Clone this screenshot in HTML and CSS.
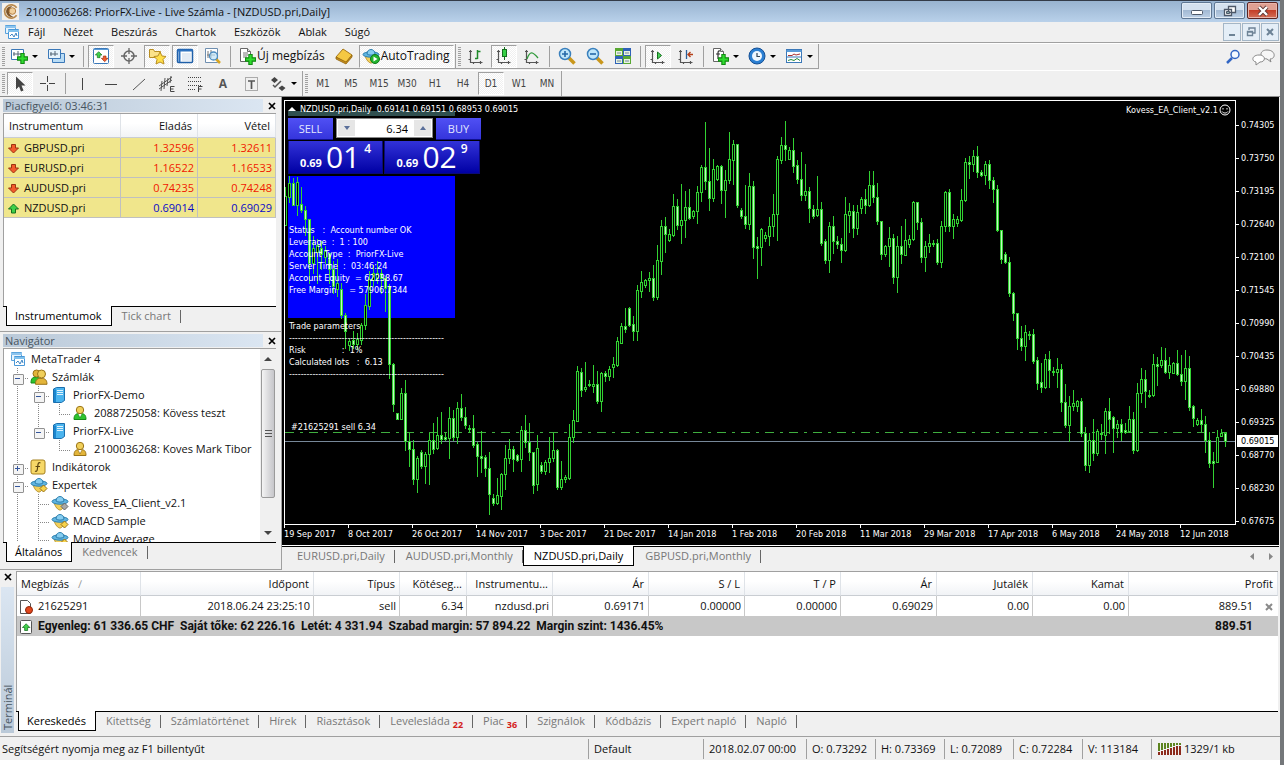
FILE: index.html
```html
<!DOCTYPE html>
<html lang="hu">
<head>
<meta charset="utf-8">
<title>2100036268: PriorFX-Live - Live Számla - [NZDUSD.pri,Daily]</title>
<link rel="stylesheet" href="styles.css">
</head>
<body>
<svg class="defs" aria-hidden="true">
  <symbol id="plus" viewBox="0 0 10 10"><path d="M3.500.5h3v3h3v3h-3v3h-3v-3h-3v-3h3z" fill="#2fdc2f" stroke="#128a12"/></symbol>
  <symbol id="mt" viewBox="0 0 16 16"><path d="M1.500 1.500h10v8h-10z" fill="#e8f4fd" stroke="#5aa3dc"/><path d="M1 3h11" stroke="#8cc4ee" stroke-width="2"/><path d="M4.500 5.500h10v9h-10z" fill="#fff" stroke="#4a98d8"/><path d="M4 7h11" stroke="#7fc0ec" stroke-width="2"/><path d="M6 12l2-2 2 3 2-4 1 3" fill="none" stroke="#3f86c4"/></symbol>
  <symbol id="hat" viewBox="0 0 18 16"><path d="M3 7c1 5 4 8 6 8s4-3 5-7z" fill="#f2cf5b" stroke="#b8922a"/><ellipse cx="9" cy="6.500" rx="8" ry="2.700" fill="#5fb4e0" stroke="#2c7fae"/><path d="M5 6c0-6 8-6 8 0-2 1.500-6 1.500-8 0z" fill="#86cdf0" stroke="#2c7fae"/></symbol>
  <symbol id="expert" viewBox="0 0 18 16"><use href="#hat"/><path d="M13.500 8l3.500 3.500-3.500 3.500-3.500-3.500z" fill="#f8d34a" stroke="#9a7418"/></symbol>
  <symbol id="expert-off" viewBox="0 0 18 16"><use href="#hat"/><path d="M13.500 8l3.500 3.500-3.500 3.500-3.500-3.500z" fill="#a8a8a8" stroke="#666"/></symbol>
  <symbol id="person" viewBox="0 0 16 16"><path d="M2 14.500c0-5 2-6 6-6s6 1 6 6z" fill="#e3b53a" stroke="#9a7418"/><circle cx="8" cy="5" r="3.700" fill="#f0cf5a" stroke="#9a7418"/><path d="M6 9l2 4 2-4" fill="#fff" stroke="#9a7418" stroke-width=".7"/></symbol>
  <symbol id="person-green" viewBox="0 0 16 16"><path d="M2 14.500c0-5 2-6 6-6s6 1 6 6z" fill="#2ec42e" stroke="#168a16"/><circle cx="8" cy="5" r="3.700" fill="#f0cf5a" stroke="#9a7418"/><path d="M6 9l2 4 2-4" fill="#fff" stroke="#168a16" stroke-width=".7"/></symbol>
  <symbol id="people" viewBox="0 0 18 16"><path d="M1 14c0-5 2-6 5-6s4 1 4 6z" fill="#2ec42e" stroke="#168a16"/><circle cx="6.500" cy="4.500" r="3.500" fill="#e3b53a" stroke="#9a7418"/><path d="M5.500 15.300c0-5 2-6 5.500-6s6 1 6 6z" fill="#e3b53a" stroke="#9a7418"/><circle cx="11.500" cy="5" r="4" fill="#f0cf5a" stroke="#9a7418"/></symbol>
  <symbol id="server" viewBox="0 0 16 16"><path d="M2.500 2l3-1.500h8v13l-3 2h-8z" fill="#4bb4ee" stroke="#1b6fae"/><path d="M6 3.500h6M6 5.500h6M6 7.500h6" stroke="#dff2fd"/><path d="M3 2.500h2v12.500h-2z" fill="#1b86cf"/></symbol>
  <symbol id="func" viewBox="0 0 16 16"><rect x="1" y="1" width="14" height="14" rx="2" fill="#f6d868" stroke="#a5801d"/><path d="M10.500 4c-2-1-2.500.5-2.700 3l-.5 3.500c-.3 2-1.300 2-2.300 1.500M5.500 7.500h4.500" fill="none" stroke="#5b4510" stroke-width="1.200"/></symbol>
  <symbol id="down" viewBox="0 0 12 12"><path d="M3.500 1.500h4v3.500h3l-5 5-5-5h3z" fill="#f25a2c" stroke="#9c3310"/></symbol>
  <symbol id="up" viewBox="0 0 12 12"><path d="M3.500 10h4v-4h3l-5-5-5 5h3z" fill="#3fd04a" stroke="#15701e"/></symbol>
  <symbol id="axes" viewBox="0 0 18 18"><path d="M3.500 3v12.500h12M2 4.500h3M13.500 14v3M6.500 15v2M1.500 12.500h2" fill="none" stroke="#555" stroke-width="1.200"/></symbol>
  <symbol id="page" viewBox="0 0 18 18"><path d="M2.500 1.500h7l3 3v10h-10z" fill="#fff" stroke="#666"/><path d="M9.500 1.500v3h3" fill="#ddd" stroke="#666"/></symbol>
</svg>

<div class="window">
  <header class="titlebar">
    <svg class="logo" viewBox="0 0 18 18"><rect width="18" height="18" fill="#f4f0ea"/><path d="M15.500 5a7 7 0 1 0 0 8" fill="none" stroke="#b98a4e" stroke-width="1.800"/><path d="M11 3.500c-5-1-8 4-6 8 1 2.500 4 4 7 3-4-1-5-4-4-7 .5-2 1.500-3 3-4z" fill="#7d5428"/><circle cx="11" cy="8.500" r="3.500" fill="#f0cf9c" stroke="#b07a3c"/></svg>
    <h1>2100036268: PriorFX-Live - Live Számla - [NZDUSD.pri,Daily]</h1>
    <div class="winbtns">
      <button aria-label="Kis méret"><svg width="14" height="12"><rect x="1.500" y="5.500" width="11" height="4" rx="1" fill="#fff" stroke="#4d5868"/></svg></button>
      <button aria-label="Előző méret"><svg width="14" height="12"><path d="M5.500 1.500h7v6h-7zM1.500 4.500h7v6h-7z" fill="#fff" stroke="#4d5868" stroke-width="1.300"/><path d="M3.500 6.500h3v2h-3z" fill="#8aa" stroke="#4d5868"/></svg></button>
      <button class="close" aria-label="Bezárás"><svg width="14" height="12"><path d="M3 2l8 8M11 2l-8 8" stroke="#5b3634" stroke-width="4"/><path d="M3 2l8 8M11 2l-8 8" stroke="#fff" stroke-width="2.400"/></svg></button>
    </div>
  </header>

  <nav class="menubar">
    <svg class="i16"><use href="#mt"/></svg>
    <button>Fájl</button><button>Nézet</button><button>Beszúrás</button><button>Chartok</button><button>Eszközök</button><button>Ablak</button><button>Súgó</button>
    <div class="mdi">
      <button aria-label="Ablak kis méret"><svg width="12" height="12"><path d="M3 9h6" stroke="#6d8396" stroke-width="2"/></svg></button>
      <button aria-label="Ablak visszaállítása"><svg width="12" height="12"><path d="M4 4v-2h6v5h-2M2.500 5.500h5v4h-5zM2 6h6" fill="none" stroke="#6d8396" stroke-width="1.400"/></svg></button>
      <button aria-label="Ablak bezárása"><svg width="12" height="12"><path d="M3 3l6 6M9 3l-6 6" stroke="#6d8396" stroke-width="2"/></svg></button>
    </div>
  </nav>

  <div class="toolrow">
    <div class="toolbar">
      <i class="grip"></i>
      <button class="tb drop" aria-label="Új chart"><svg class="i18" viewBox="0 0 18 18"><path d="M1.500 2.500h12v10h-12z" fill="#fff" stroke="#3b78b8"/><path d="M4 5v4M8 4v5M3 7h8" stroke="#567"/><use href="#plus" x="7" y="6" width="11" height="11"/></svg></button>
      <button class="tb drop" aria-label="Profilok"><svg class="i18" viewBox="0 0 18 18"><path d="M5.500 6.500h12v9h-12z" fill="#b9dcf5" stroke="#3b78b8"/><path d="M1.500 2.500h12v9h-12z" fill="#e6f3fc" stroke="#3b78b8"/><path d="M4 5v4M8 4v5M3 7h8" stroke="#567"/></svg></button>
      <i class="sep"></i>
      <button class="tb on" aria-label="Piacfigyelő"><svg class="i18" viewBox="0 0 18 18"><rect x="1.500" y="1.500" width="15" height="15" rx="1" fill="#fff" stroke="#3b78b8"/><path d="M1.500 2.500h15" stroke="#5a9bd8"/><use href="#up" x="3" y="4" width="8" height="8"/><use href="#down" x="9" y="8" width="8" height="8"/></svg></button>
      <button class="tb" aria-label="Adatablak"><svg class="i18" viewBox="0 0 18 18"><circle cx="9" cy="9" r="5" fill="none" stroke="#666" stroke-width="1.500"/><path d="M9 1v6M9 11v6M1 9h6M11 9h6" stroke="#666" stroke-width="1.300"/></svg></button>
      <button class="tb on" aria-label="Navigátor"><svg class="i18" viewBox="0 0 18 18"><path d="M1.500 2.500h4l1 2h6v6h-11z" fill="#fbe28a" stroke="#b98e22"/><path d="M12 5l2 4 4 .5-3 3 1 4.500-4-2-4 2 1-4.500-3-3 4-.5z" fill="#ffdf4a" stroke="#b98e22"/></svg></button>
      <button class="tb on" aria-label="Terminál"><svg class="i18" viewBox="0 0 18 18"><rect x="1.500" y="2.500" width="15" height="13" rx="1" fill="#fff" stroke="#1f5fa8" stroke-width="1.500"/><path d="M1.500 3.500h15M3.500 3v12" stroke="#2d72c0" stroke-width="2"/><path d="M6 7h9M6 9h9M6 11h9M6 13h9" stroke="#c8d8ea"/></svg></button>
      <button class="tb" aria-label="Stratégiatesztelő"><svg class="i18" viewBox="0 0 18 18"><path d="M1.500 1.500h12v14h-12z" fill="#fff" stroke="#6f8fb0"/><path d="M4 4v7M7 3v8M3 8h8" stroke="#777"/><path d="M12 12l4 4" stroke="#d8a520" stroke-width="2.500"/><circle cx="9.500" cy="9" r="4" fill="#bfe3f7" fill-opacity=".7" stroke="#4c8cc0" stroke-width="1.300"/></svg></button>
      <i class="sep"></i>
      <button class="tb text"><svg class="i18" viewBox="0 0 18 18"><use href="#page"/><path d="M5 6h5M5 8h5M5 10h4" stroke="#777"/><use href="#plus" x="7" y="7" width="11" height="11"/></svg>Új megbízás</button>
      <button class="tb" aria-label="MetaEditor"><svg class="i18" viewBox="0 0 18 18"><path d="M1 10l7-8 9 6-6 8z" fill="#f5c842" stroke="#a87818"/><path d="M1 10v2l10 5 6-7v-2l-6 7z" fill="#c98f1c" stroke="#8f6410" stroke-width=".8"/></svg></button>
      <button class="tb on text"><svg class="i18" viewBox="0 0 18 16"><use href="#hat"/><circle cx="13" cy="11" r="4.500" fill="#24b52f" stroke="#0f7a18"/><path d="M11.500 8.500l4 2.500-4 2.500z" fill="#fff"/></svg>AutoTrading</button>
    </div>
    <div class="toolbar">
      <i class="grip"></i>
      <button class="tb" aria-label="Oszlop chart"><svg class="i18" viewBox="0 0 18 18"><use href="#axes"/><path d="M10.500 3v9M8 11.500h2.500M10.500 4.500h3" stroke="#1f8a2a" stroke-width="1.500"/></svg></button>
      <button class="tb on" aria-label="Gyertya chart"><svg class="i18" viewBox="0 0 18 18"><use href="#axes"/><path d="M9.500 0v13" stroke="#15701e"/><rect x="7.500" y="2.500" width="4" height="7" fill="#35d045" stroke="#15701e"/></svg></button>
      <button class="tb" aria-label="Vonal chart"><svg class="i18" viewBox="0 0 18 18"><use href="#axes"/><path d="M4 12c3-9 6-7 11-1" fill="none" stroke="#2f9a3a" stroke-width="1.300"/></svg></button>
      <i class="sep"></i>
      <button class="tb" aria-label="Nagyítás"><svg class="i18" viewBox="0 0 18 18"><path d="M11 11l5.500 5.500" stroke="#c9971c" stroke-width="3.500"/><circle cx="7" cy="7" r="5.500" fill="#bfe6fa" stroke="#3a80bd" stroke-width="1.500"/><path d="M4 7h6M7 4v6" stroke="#2468a8" stroke-width="1.600"/></svg></button>
      <button class="tb" aria-label="Kicsinyítés"><svg class="i18" viewBox="0 0 18 18"><path d="M11 11l5.500 5.500" stroke="#c9971c" stroke-width="3.500"/><circle cx="7" cy="7" r="5.500" fill="#bfe6fa" stroke="#3a80bd" stroke-width="1.500"/><path d="M4 7h6" stroke="#2468a8" stroke-width="1.600"/></svg></button>
      <button class="tb" aria-label="Ablakok elrendezése"><svg class="i18" viewBox="0 0 18 18"><path d="M1 1h8v8H1zM9 9h8v8H9z" fill="#58a832"/><path d="M9 1h8v8H9zM1 9h8v8H1z" fill="#2f62b8"/><path d="M2 4h6v4H2zM10 4h6v4h-6zM2 12h6v4H2zM10 12h6v4h-6z" fill="#e8f4e0"/><path d="M3 6h4M11 6h4M3 14h4M11 14h4" stroke="#789"/></svg></button>
      <i class="sep"></i>
      <button class="tb on" aria-label="Automatikus görgetés"><svg class="i18" viewBox="0 0 18 18"><use href="#axes"/><path d="M8.500 5l4 3.500-4 3.500z" fill="#4ad35a" stroke="#15701e"/></svg></button>
      <button class="tb" aria-label="Chart eltolás"><svg class="i18" viewBox="0 0 18 18"><use href="#axes"/><path d="M9.500 3v9" stroke="#2a5f9a" stroke-width="1.300"/><path d="M16 7.500h-5M13.500 5l-2.500 2.500 2.500 2.500" fill="none" stroke="#b5401a" stroke-width="1.400"/></svg></button>
      <i class="sep"></i>
      <button class="tb drop" aria-label="Indikátorok"><svg class="i18" viewBox="0 0 18 18"><use href="#page"/><path d="M9 4c-2-.5-2 1-2 3v5M5 7h4" fill="none" stroke="#333" stroke-width="1.200"/><use href="#plus" x="7" y="7" width="11" height="11"/></svg></button>
      <button class="tb drop" aria-label="Időszakok"><svg class="i18" viewBox="0 0 18 18"><circle cx="9" cy="9" r="8" fill="#2b7fd2" stroke="#154f94"/><circle cx="9" cy="9" r="5" fill="#eef7ff"/><path d="M9 6v3.500h3" fill="none" stroke="#345" stroke-width="1.200"/></svg></button>
      <button class="tb drop" aria-label="Sablonok"><svg class="i18" viewBox="0 0 18 18"><rect x="1.500" y="2.500" width="15" height="13" fill="#fff" stroke="#3b78b8"/><path d="M1.500 4h15" stroke="#5a9bd8" stroke-width="2"/><path d="M3 8.500h4l2-1.500 2 1 4-1" fill="none" stroke="#a33"/><path d="M1 10h16" stroke="#3b78b8"/><path d="M3 13.500l3-1 3 1 3-2 3 2" fill="none" stroke="#2a8a3a"/></svg></button>
    </div>
    <div class="toolright">
      <button aria-label="Keresés"><svg width="16" height="16"><circle cx="10" cy="5.500" r="4" fill="#f4faff" stroke="#3266c4" stroke-width="1.500"/><path d="M7 9l-5 5" stroke="#3266c4" stroke-width="2.500"/></svg></button>
      <button aria-label="Üzenetek"><svg width="24" height="18"><path d="M15 2c9 0 9 9 3 9l1 3-4-3c-8-1-8-9 0-9z" fill="#f7f7f7" stroke="#888"/><path d="M7 7c7 0 7 7 1 7l-4 3v-3c-5-1-4-7 3-7z" fill="#fff" stroke="#888"/></svg></button>
    </div>
  </div>

  <div class="toolrow second">
    <div class="toolbar">
      <i class="grip"></i>
      <button class="tb on" aria-label="Kurzor"><svg class="i18" viewBox="0 0 18 18"><path d="M5 1.500v13l3-3 2 5 2.500-1-2-5h4z" fill="#444"/></svg></button>
      <button class="tb" aria-label="Szálkereszt"><svg class="i18" viewBox="0 0 18 18"><path d="M8.500 1v6M8.500 10v6M1 8.500h6M10 8.500h6" stroke="#444"/></svg></button>
      <i class="sep"></i>
      <button class="tb" aria-label="Függőleges vonal"><svg class="i18" viewBox="0 0 18 18"><path d="M8.500 3v12" stroke="#444"/></svg></button>
      <button class="tb" aria-label="Vízszintes vonal"><svg class="i18" viewBox="0 0 18 18"><path d="M3 9.500h12" stroke="#444"/></svg></button>
      <button class="tb" aria-label="Trendvonal"><svg class="i18" viewBox="0 0 18 18"><path d="M3 15l12-11" stroke="#555"/></svg></button>
      <button class="tb" aria-label="Csatorna"><svg class="i18" viewBox="0 0 18 18"><path d="M1 11l13-9M1 14l13-9M4 6l-1 10M7 3l-1 11M10 3l-1 8M13 1l-1 7" stroke="#555"/><path d="M16.500 11.500h-4v5h4M12.500 14h3" fill="none" stroke="#444"/></svg></button>
      <button class="tb" aria-label="Fibonacci"><svg class="i18" viewBox="0 0 18 18"><path d="M2 2.500h14M2 6.500h14M2 10.500h14M2 14.500h8" stroke="#444" stroke-dasharray="1 1"/><path d="M12.500 17v-5.500h4M12.500 14h3" fill="none" stroke="#444"/></svg></button>
      <button class="tb letter">A</button>
      <button class="tb" aria-label="Szövegcímke"><svg class="i18" viewBox="0 0 18 18"><path d="M3.500 2.500h12v13h-12z" fill="none" stroke="#666" stroke-dasharray="1 1"/><path d="M6 6h7M9.500 6v8" stroke="#555" stroke-width="1.700"/></svg></button>
      <button class="tb drop" aria-label="Nyilak"><svg class="i18" viewBox="0 0 18 18"><path d="M5.500 2l3.500 3-3.500 3-3.500-3zM13 10.500l3.500 2.500-3.500 3-3.500-3z" fill="#444"/><path d="M4 10l2 2 6-6" fill="none" stroke="#555" stroke-width="1.500"/></svg></button>
    </div>
    <div class="toolbar frames">
      <i class="grip"></i>
      <button class="tb">M1</button><button class="tb">M5</button><button class="tb">M15</button><button class="tb">M30</button><button class="tb">H1</button><button class="tb">H4</button><button class="tb on">D1</button><button class="tb">W1</button><button class="tb">MN</button>
    </div>
  </div>

  <div class="workspace">
    <aside class="docks">
      <section class="dock market">
        <header><h2>Piacfigyelő: 03:46:31</h2><button class="x" aria-label="Piacfigyelő bezárása"><svg width="8" height="8"><path d="M1 1l6 6M7 1l-6 6" stroke="#000" stroke-width="1.700"/></svg></button></header>
        <div class="pane">
          <table class="quotes">
            <colgroup><col class="q1"><col class="q2"><col></colgroup>
            <thead><tr><th>Instrumentum</th><th>Eladás</th><th>Vétel</th></tr></thead>
            <tbody>
              <tr><td><svg class="i12"><use href="#down"/></svg>GBPUSD.pri</td><td>1.32596</td><td>1.32611</td></tr>
              <tr><td><svg class="i12"><use href="#down"/></svg>EURUSD.pri</td><td>1.16522</td><td>1.16533</td></tr>
              <tr><td><svg class="i12"><use href="#down"/></svg>AUDUSD.pri</td><td>0.74235</td><td>0.74248</td></tr>
              <tr class="rise"><td><svg class="i12"><use href="#up"/></svg>NZDUSD.pri</td><td>0.69014</td><td>0.69029</td></tr>
            </tbody>
          </table>
        </div>
        <div class="tabs"><button class="active">Instrumentumok</button><button>Tick chart</button></div>
      </section>
      <section class="dock navigator">
        <header><h2>Navigátor</h2><button class="x" aria-label="Navigátor bezárása"><svg width="8" height="8"><path d="M1 1l6 6M7 1l-6 6" stroke="#000" stroke-width="1.700"/></svg></button></header>
        <div class="pane nav-pane">
          <ul class="tree">
            <li class="root"><svg class="i16"><use href="#mt"/></svg>MetaTrader 4</li>
            <li><i class="tee box minus"></i><svg class="i18"><use href="#people"/></svg>Számlák</li>
            <li><i class="line"></i><i class="tee box minus"></i><svg class="i16"><use href="#server"/></svg>PriorFX-Demo</li>
            <li><i class="line"></i><i class="line"></i><i class="end"></i><svg class="i16"><use href="#person-green"/></svg>2088725058: Kövess teszt</li>
            <li><i class="line"></i><i class="end box minus"></i><svg class="i16"><use href="#server"/></svg>PriorFX-Live</li>
            <li><i class="line"></i><i></i><i class="end"></i><svg class="i16"><use href="#person"/></svg>2100036268: Koves Mark Tibor</li>
            <li><i class="tee box"></i><svg class="i16"><use href="#func"/></svg>Indikátorok</li>
            <li><i class="tee box minus"></i><svg class="i18"><use href="#expert"/></svg>Expertek</li>
            <li><i class="line"></i><i class="tee"></i><svg class="i18"><use href="#expert-off"/></svg>Kovess_EA_Client_v2.1</li>
            <li><i class="line"></i><i class="tee"></i><svg class="i18"><use href="#expert"/></svg>MACD Sample</li>
            <li><i class="line"></i><i class="tee"></i><svg class="i18"><use href="#expert"/></svg>Moving Average</li>
          </ul>
          <div class="scroll"><svg width="16" height="20"><path d="M4 12l4-4 4 4z" fill="#444"/></svg><div class="thumb"><i></i><i></i><i></i></div><svg width="16" height="20"><path d="M4 9l4 4 4-4z" fill="#444"/></svg></div>
        </div>
        <div class="tabs"><button class="active">Általános</button><button>Kedvencek</button></div>
      </section>
    </aside>

    <main class="chartwin">
      <div class="chart">
        <div class="plot">
          <div class="status-box"></div>
          <svg id="candles" class="candles" role="img" aria-label="NZDUSD napi gyertyák"></svg>
          <div class="teal"></div>
          <div class="plot-title"><svg width="8" height="6"><path d="M0 5l4-4 4 4z" fill="#fff"/></svg><span>NZDUSD.pri,Daily&nbsp; 0.69141 0.69151 0.68953 0.69015</span></div>
          <div class="ea-name">Kovess_EA_Client_v2.1<svg width="12" height="12"><circle cx="6" cy="6" r="5" fill="none" stroke="#fff"/><path d="M4 4v1.500M8 4v1.500M3 7.500c1.500 2 4.500 2 6 0" fill="none" stroke="#fff"/></svg></div>
          <div class="trade">
            <button class="side">SELL</button>
            <div class="spin"><button aria-label="Kevesebb"><svg width="6" height="4"><path d="M0 0h6l-3 4z" fill="#5a6f9a"/></svg></button><input value="6.34" aria-label="Lot"><button aria-label="Több"><svg width="6" height="4"><path d="M0 4h6l-3-4z" fill="#5a6f9a"/></svg></button></div>
            <button class="side">BUY</button>
            <div class="price"><b>0.69</b><span>01</span><sup>4</sup></div>
            <div class="price"><b>0.69</b><span>02</span><sup>9</sup></div>
          </div>
          <pre class="info">Status   :  Account number OK
Leverage  :  1 : 100
Account Type  :  PriorFX-Live
Server Time  :  03:46:24
Account Equity  = 62238.67
Free Margin     = 57906.7344


Trade parameters
-----------------------------------------------------
Risk              :  1%
Calculated lots   :  6.13
-----------------------------------------------------</pre>
          <div class="order-label">#21625291 sell 6.34</div>
        </div>
        <ol class="prices"><li>0.74305</li><li>0.73750</li><li>0.73195</li><li>0.72640</li><li>0.72100</li><li>0.71545</li><li>0.70990</li><li>0.70435</li><li>0.69880</li><li>0.69325</li><li>0.68770</li><li>0.68230</li><li class="last">0.67675</li><li class="current">0.69015</li></ol>
        <ol class="dates"><li>19 Sep 2017</li><li>8 Oct 2017</li><li>26 Oct 2017</li><li>14 Nov 2017</li><li>3 Dec 2017</li><li>21 Dec 2017</li><li>14 Jan 2018</li><li>1 Feb 2018</li><li>20 Feb 2018</li><li>11 Mar 2018</li><li>29 Mar 2018</li><li>17 Apr 2018</li><li>6 May 2018</li><li>24 May 2018</li><li>12 Jun 2018</li></ol>
      </div>
      <div class="tabs chart-tabs"><button>EURUSD.pri,Daily</button><button>AUDUSD.pri,Monthly</button><button class="active">NZDUSD.pri,Daily</button><button>GBPUSD.pri,Monthly</button><svg class="tabarrows" width="26" height="10"><path d="M5 1v7l-4-3.500zM20 1v7l4-3.500z" fill="#888"/></svg></div>
    </main>
  </div>

  <section class="terminal">
    <div class="rail"><button class="x" aria-label="Terminál bezárása"><svg width="8" height="8"><path d="M1 1l6 6M7 1l-6 6" stroke="#000" stroke-width="1.700"/></svg></button><h2>Terminál</h2></div>
    <div class="term-main">
      <div class="term-pane">
        <table class="orders">
          <colgroup><col class="w124"><col class="w173"><col class="w86"><col class="w67"><col class="w86"><col class="w96"><col class="w96"><col class="w96"><col class="w96"><col class="w96"><col class="w96"><col></colgroup>
          <thead><tr><th>Megbízás <span class="sort">∕</span></th><th>Időpont</th><th>Típus</th><th>Kötéseg...</th><th>Instrumentu...</th><th>Ár</th><th>S / L</th><th>T / P</th><th>Ár</th><th>Jutalék</th><th>Kamat</th><th>Profit</th></tr></thead>
          <tbody>
            <tr><td><svg class="i14" viewBox="0 0 14 14"><path d="M1.500.5h7l3 3v10h-10z" fill="#fff" stroke="#555"/><circle cx="10" cy="10" r="3.500" fill="#e2461c" stroke="#8e2508"/></svg>21625291</td><td>2018.06.24 23:25:10</td><td>sell</td><td>6.34</td><td>nzdusd.pri</td><td>0.69171</td><td>0.00000</td><td>0.00000</td><td>0.69029</td><td>0.00</td><td>0.00</td><td>889.51<button class="x" aria-label="Pozíció zárása"><svg width="8" height="8"><path d="M1 1l6 6M7 1l-6 6" stroke="#8a8a8a" stroke-width="2"/></svg></button></td></tr>
            <tr class="sum"><td colspan="11"><svg class="i14" viewBox="0 0 14 14"><rect x="1.500" y=".5" width="11" height="13" rx="1" fill="#fff" stroke="#555"/><use href="#up" x="3" y="3" width="9" height="9"/></svg>Egyenleg: 61 336.65 CHF&nbsp; Saját tőke: 62 226.16&nbsp; Letét: 4 331.94&nbsp; Szabad margin: 57 894.22&nbsp; Margin szint: 1436.45%</td><td>889.51</td></tr>
          </tbody>
        </table>
      </div>
      <div class="tabs term-tabs"><button class="active">Kereskedés</button><button>Kitettség</button><button>Számlatörténet</button><button>Hírek</button><button>Riasztások</button><button>Levelesláda<sub>22</sub></button><button>Piac<sub>36</sub></button><button>Szignálok</button><button>Kódbázis</button><button>Expert napló</button><button>Napló</button></div>
    </div>
  </section>

  <footer class="statusbar">
    <span class="help">Segítségért nyomja meg az F1 billentyűt</span>
    <span class="c-profile">Default</span><span class="c-date">2018.02.07 00:00</span><span class="c-val">O: 0.73292</span><span class="c-val">H: 0.73369</span><span class="c-val">L: 0.72089</span><span class="c-val">C: 0.72284</span><span class="c-val">V: 113184</span>
    <span class="c-conn"><svg width="24" height="14"><path d="M1 1h2v8H1zM4 1h2v7H4zM7 1h2v6H7zM10 1h2v5H10zM13 1h2v4H13zM16 1h2v3H16zM19 1h2v2H19zM22 1h2v2H22z" fill="#5d8420"/><path d="M1 10h2v3H1zM4 9h2v4H4zM7 8h2v5H7zM10 7h2v6H10zM13 6h2v7H13zM16 5h2v8H16zM19 4h2v9H19zM22 4h2v9H22z" fill="#8c2a1c"/></svg>1329/1 kb</span>
  </footer>
</div>
<script src="chart.js"></script>
</body>
</html>
```

FILE: styles.css
```css
* { box-sizing: border-box; }
body { margin: 0; background: #fff; font: 11px/16px "Open Sans", "Liberation Sans", sans-serif; color: #111; }
button { font: inherit; color: inherit; border: 0; background: none; padding: 0; margin: 0; }
h1, h2 { margin: 0; font-size: 11px; font-weight: 400; }
svg { display: block; flex: none; }
ul, ol { list-style: none; margin: 0; padding: 0; }
.defs { position: absolute; width: 0; height: 0; }
.i12 { width: 12px; height: 12px; }
.i14 { width: 14px; height: 14px; }
.i16 { width: 16px; height: 16px; }
.i18 { width: 18px; height: 18px; }

.window { display: flex; flex-direction: column; min-height: 100vh; padding-bottom: 5px; background: #fff; border-right: 4px solid #74777a; }
.window > * { background: #f0f0f0; }

/* title and menu */
.window > .titlebar { display: flex; align-items: center; gap: 7px; height: 22px; padding-left: 2px; border-top: 1px solid #333b48; background: linear-gradient(#98b3d0, #b9d1ea); }
.titlebar h1 { flex: 1; }
.logo { width: 17px; height: 17px; }
.winbtns { display: flex; gap: 2px; align-self: flex-start; padding: 1px 2px 0 0; }
.winbtns button { display: grid; place-items: center; width: 31px; height: 17px; border: 1px solid #5f7793; border-radius: 2px; background: linear-gradient(#d4e1ef 45%, #a3bad4 50%, #bcd0e6); box-shadow: inset 0 0 0 1px #e2ecf6; }
.winbtns .close { border-color: #5c2420; background: linear-gradient(#e0a092 45%, #c43f28 50%, #d3705a); box-shadow: inset 0 0 0 1px #e9b5aa; }
.menubar { display: flex; align-items: center; gap: 18px; height: 21px; padding-left: 4px; border-bottom: 1px solid #a0a0a0; }
.menubar .i16 { margin-right: -10px; }
.mdi { display: flex; gap: 1px; margin-left: auto; padding-right: 1px; }
.mdi button { display: grid; place-items: center; width: 18px; height: 18px; border: 1px solid #a4b6c6; background: #e4eef7; }

/* toolbars */
.toolrow { display: flex; height: 27px; border-top: 1px solid #fff; border-bottom: 1px solid #f0f0f0; }
.window > .second { border-bottom: 1px solid #8c8c8c; }
.toolbar { display: flex; align-items: center; gap: 2px; padding: 0 1px 0 2px; border-right: 1px solid #a0a0a0; border-bottom: 1px solid #a0a0a0; }
.second .toolbar { border-bottom: 0; }
.grip { width: 3px; height: 19px; background: repeating-linear-gradient(#a0a0a0 0 1px, #f0f0f0 1px 2px); }
.sep { width: 1px; height: 21px; margin: 0 2px; background: #a0a0a0; }
.tb { position: relative; display: flex; align-items: center; justify-content: center; width: 26px; height: 23px; border: 1px solid transparent; }
.tb.on { border-color: #a0a0a0 #fff #fff #a0a0a0; background: repeating-conic-gradient(#f0f0f0 0 25%, #fff 0 50%) 0 0 / 2px 2px; }
.tb.drop { width: 35px; justify-content: flex-start; padding-left: 2px; }
.tb.drop::after { content: ""; margin-left: 4px; border: 3px solid transparent; border-top: 3px solid #000; border-bottom: 0; }
.tb.text { width: auto; padding: 0 3px 0 2px; gap: 1px; font-size: 12px; }
.tb.letter { font-weight: 700; font-size: 12px; color: #555; }
.frames .tb { font-size: 10px; font-family: "DejaVu Sans Condensed", "DejaVu Sans", sans-serif; color: #444; }
.toolright { display: flex; align-items: center; gap: 11px; margin-left: auto; padding-right: 4px; }

/* docked panels */
.workspace { display: flex; flex: 1; min-width: 0; }
.docks { display: flex; flex-direction: column; width: 282px; flex: none; border-right: 1px solid #a0a0a0; }
.dock { display: flex; flex-direction: column; padding: 1px 5px 0 3px; border-bottom: 1px solid #a0a0a0; }
.market { height: 235px; padding-bottom: 4px; }
.navigator { flex: 1; padding-bottom: 3px; }
.dock header { display: flex; align-items: center; height: 15px; color: #47545f; }
.dock h2 { flex: 1; margin-right: 4px; padding-left: 2px; line-height: 13px; background: linear-gradient(90deg, #bac9d8, #dbe6f2); }
.x { display: grid; place-items: center; width: 9px; height: 12px; }
.pane { flex: 1; min-height: 0; overflow: hidden; background: #fff; border-top: 1px solid #a0a0a0; border-left: 1px solid #a0a0a0; }
table { width: 100%; border-collapse: separate; border-spacing: 0; table-layout: fixed; }
th { font-weight: 400; text-align: right; background: linear-gradient(#fff 40%, #f1f3f6); border-right: 1px solid #dfe3e8; border-bottom: 1px solid #c9cdd2; }
th:first-child { text-align: left; }
td { text-align: right; white-space: nowrap; }
td:first-child { text-align: left; }
td svg { display: inline-block; vertical-align: middle; }
.q1 { width: 117px; }
.q2 { width: 77px; }
.quotes th { height: 24px; padding: 0 5px; }
.quotes td { height: 20px; padding: 0 3px 0 4px; background: #f0e68c; border-right: 1px solid #c0c0c0; border-bottom: 1px solid #c0c0c0; color: #f01800; }
.quotes td:first-child { color: #111; }
.quotes .rise td { color: #0a0ac8; }
.quotes .rise td:first-child { color: #111; }
.quotes td svg { margin-right: 4px; }

.tabs { display: flex; height: 21px; padding-left: 3px; color: #777; background: linear-gradient(#000 0 1px, #f0f0f0 1px); }
.tabs button { display: flex; align-items: center; height: 20px; padding: 0 10px; white-space: nowrap; background: linear-gradient(#666, #666) right 4px / 1px 13px no-repeat; }
.tabs .active { color: #000; background: #fff; padding: 0 9px 0 8px; border: 1px solid #000; border-top: 0; }
.nav-pane { display: flex; height: 194px; flex: none; }
.tree { flex: 1; min-width: 0; overflow: hidden; padding: 1px 0 0 3px; }
.tree li { display: flex; align-items: center; height: 18px; gap: 6px; white-space: nowrap; }
.tree .root { padding-left: 1px; gap: 5px; }
.tree li > i { position: relative; flex: none; width: 21px; height: 18px; margin-right: -6px; }
.tree svg { margin-left: 2px; }
.tree .i18 { margin-right: -2px; }
.line { background: repeating-linear-gradient(#888 0 1px, transparent 1px 2px) 10px 0 / 1px 100% no-repeat; }
.tee { background: repeating-linear-gradient(#888 0 1px, transparent 1px 2px) 10px 0 / 1px 100% no-repeat, repeating-linear-gradient(90deg, #888 0 1px, transparent 1px 2px) 10px 10px / 11px 1px no-repeat; }
.end { background: repeating-linear-gradient(#888 0 1px, transparent 1px 2px) 10px 0 / 1px 10px no-repeat, repeating-linear-gradient(90deg, #888 0 1px, transparent 1px 2px) 10px 10px / 11px 1px no-repeat; }
.box::before { content: ""; position: absolute; left: 6px; top: 6px; width: 9px; height: 9px; border: 1px solid #919191; border-radius: 1px; background: linear-gradient(#34569c, #34569c) 1px 3px / 5px 1px no-repeat, linear-gradient(#34569c, #34569c) 3px 1px / 1px 5px no-repeat, #f4f4f4; }
.box.minus::before { background: linear-gradient(#34569c, #34569c) 1px 3px / 5px 1px no-repeat, #f4f4f4; }
.scroll { display: flex; flex-direction: column; width: 16px; background: #f0f0f0; }
.thumb { display: flex; flex-direction: column; justify-content: center; align-items: center; gap: 2px; height: 129px; margin: 0 1px; margin-bottom: auto; border: 1px solid #9a9a9a; border-radius: 2px; background: linear-gradient(90deg, #f4f4f4, #dcdcde 50%, #c6c6ca); }
.thumb i { width: 7px; height: 1px; background: #555; }

/* chart */
.chartwin { display: flex; flex-direction: column; flex: 1; min-width: 0; padding: 0 1px 3px 0; }
.chart { display: grid; grid-template: minmax(425px, 1fr) 20px / minmax(0, 1fr) 43px; padding: 3px 0 0 2px; background: #000; color: #fff; font: 9px/12px "DejaVu Sans Condensed", "DejaVu Sans", sans-serif; border-bottom: 1px solid #fff; flex: 1; }
.plot { position: relative; border: 1px solid #fff; overflow: hidden; }
.candles { position: absolute; inset: 0; width: 100%; height: 100%; }
.plot-title { position: absolute; left: 3px; top: 2px; display: flex; align-items: center; gap: 4px; }
.ea-name { position: absolute; right: 4px; top: 3px; display: flex; align-items: center; gap: 1px; }
.teal { position: absolute; left: 3px; top: 10px; width: 167px; height: 5px; background: #2f4f4f; }
.status-box { position: absolute; left: 3px; top: 75px; width: 167px; height: 142px; background: #00f; }
.info { position: absolute; left: 4px; top: 123px; margin: 0; font: inherit; }
.order-label { position: absolute; left: 6px; top: 320px; }
.trade { position: absolute; left: 3px; top: 17px; display: grid; grid-template-columns: 45px 51px 52px 45px; row-gap: 1px; width: 193px; font-family: "Open Sans", sans-serif; }
.side { height: 22px; font-size: 11px; color: #e4e8ff; background: linear-gradient(#5050f4, #3535dc); border-bottom: 1px solid #101090; }
.spin { display: flex; grid-column: 2 / 4; margin: 0 3px; height: 20px; border: 1px solid #888; background: #fff; }
.spin button { display: grid; place-items: center; width: 19px; background: #e6e6e6; border: 1px solid #fff; }
.spin input { flex: 1; min-width: 0; border: 0; padding: 0 5px; text-align: right; font: 11px "Open Sans", sans-serif; background: #fff; }
.price { display: flex; align-items: flex-end; justify-content: center; grid-column: span 2; gap: 4px; height: 33px; margin-right: 1px; padding-bottom: 2px; color: #fff; background: linear-gradient(#3232d8, #0000a4); border: 1px solid #0a0a78; border-top: 0; }
.price b { font: 700 11px/16px "Open Sans", sans-serif; }
.price span { font: 400 30px/29px "Open Sans", sans-serif; }
.price sup { align-self: flex-start; font: 600 12px/16px "Open Sans", sans-serif; }
.prices { position: relative; display: flex; flex-direction: column; padding-top: 9px; }
.prices li { height: 33px; line-height: 33px; padding-left: 5px; background: linear-gradient(#fff, #fff) 0 16px / 3px 1px no-repeat; }
.prices .last { height: 19px; }
.prices .current { position: absolute; left: 1px; top: 335px; width: 41px; height: 12px; line-height: 12px; padding-left: 4px; color: #000; background: #fff; }
.dates { display: flex; grid-column: 1 / 3; overflow: hidden; }
.dates li { flex: 0 0 64px; padding-top: 3px; white-space: nowrap; background: linear-gradient(#fff, #fff) 0 0 / 1px 3px no-repeat; }
.chart-tabs { padding-left: 4px; }
.chart-tabs button { padding: 0 10px 0 11px; }
.chart-tabs .active { padding: 0 10px; }
.chart-tabs .tabarrows { margin: 6px 4px 0 auto; }

/* terminal */
.terminal { display: flex; height: 167px; padding: 1px 2px 0 0; border-bottom: 1px solid #a0a0a0; }
.rail { display: flex; flex-direction: column; align-items: center; gap: 4px; width: 16px; padding: 0 2px 3px 1px; }
.rail h2 { flex: 1; writing-mode: vertical-rl; transform: rotate(180deg); width: 13px; line-height: 13px; color: #47545f; padding-top: 3px; background: linear-gradient(#bac9d8, #dbe6f2); }
.term-main { display: flex; flex-direction: column; flex: 1; min-width: 0; padding-bottom: 4px; }
.term-pane { flex: 1; background: #fff; border-top: 1px solid #a0a0a0; border-left: 1px solid #a0a0a0; }
.w124 { width: 124px; } .w173 { width: 173px; } .w86 { width: 86px; } .w67 { width: 67px; } .w96 { width: 96px; }
.orders th { height: 24px; padding: 0 4px; }
.orders td { height: 20px; padding: 0 3px; border-right: 1px solid #c8c8c8; }
.orders td:first-child { padding-left: 2px; }
.orders td svg { margin-right: 5px; }
.orders td:last-child { border-right: 0; padding-right: 25px; }
.orders tr:first-child td:last-child { padding-right: 5px; }
.orders td .x { display: inline-block; width: 20px; text-align: right; }
.orders td .x svg { margin-right: 0; }
.orders .sum td { background: #c8c8c8; border: 0; font: 700 12px/16px Roboto, "Liberation Sans", sans-serif; }
.sort { color: #999; padding-left: 6px; }
.term-tabs { padding-left: 2px; }
.term-tabs sub { align-self: flex-end; margin-left: 3px; font-size: 9px; line-height: 12px; font-weight: 700; color: #d42020; }

/* status bar */
.statusbar { display: flex; align-items: center; height: 23px; padding-left: 2px; white-space: nowrap; }
.statusbar span { padding: 2px 0 2px 5px; border-left: 1px solid #a0a0a0; }
.statusbar .help { flex: 1; border: 0; padding-left: 0; }
.statusbar .c-profile { width: 115px; }
.statusbar .c-date { width: 103px; }
.statusbar .c-val { width: 69px; }
.statusbar .c-conn { display: flex; align-items: center; gap: 3px; width: 129px; }
```

FILE: chart.js
```js
// Each candle: high, body top, body bottom, low, falling (1) or rising (0).
const CANDLES = `
187,196,225,225,0 176,183,197,202,0 178,183,205,205,1 177,182,205,215,0 187,204,210,212,1 206,210,219,235,1
219,219,263,283,1 236,248,263,273,0 239,245,252,283,0 241,248,254,269,1 246,251,257,263,0 253,253,269,283,1
261,269,286,293,1 259,283,289,296,0 283,289,315,318,1 313,315,331,348,1 339,341,345,350,0 331,340,344,348,1
333,339,344,349,0 323,325,340,344,0 294,305,325,329,0 271,279,306,309,0 265,273,280,286,0 261,273,278,283,0
269,273,278,293,1 276,278,288,311,1 284,286,364,378,1 363,364,404,411,1 413,413,419,419,1 388,393,419,419,0
380,393,441,450,1 433,441,449,466,1 440,449,479,484,1 456,458,479,492,0 450,452,466,468,1 452,454,466,483,0
433,440,454,484,0 423,440,449,453,1 417,435,448,449,0 412,435,439,443,1 433,437,439,440,1 407,418,438,458,0
410,418,437,440,1 402,408,437,443,0 394,408,417,420,1 407,417,425,428,1 425,428,429,432,1 415,428,445,447,1
442,444,456,476,1 431,456,458,472,1 455,457,468,476,1 452,468,494,514,1 494,498,503,505,1 478,495,503,504,0
473,474,496,509,0 445,458,474,489,0 439,449,458,463,0 446,449,459,471,1 454,455,460,461,1 426,430,459,471,0
415,430,442,447,1 423,442,452,460,1 452,452,485,493,1 435,448,484,490,0 462,465,471,473,1 460,462,471,474,0
437,458,462,472,0 433,450,458,461,0 449,450,487,489,1 461,479,487,489,0 475,477,479,482,0 424,437,478,479,0
410,420,437,442,0 366,371,421,421,0 368,372,390,396,1 362,387,389,391,0 380,384,385,386,1 365,384,386,392,0
371,384,401,403,1 372,373,401,411,0 371,373,376,381,1 366,369,376,380,0 357,364,367,377,0 337,341,365,366,0
323,326,343,343,0 308,326,329,332,1 307,308,325,326,1 316,324,331,340,1 285,290,331,340,0 271,282,291,297,0
279,280,285,287,0 272,278,280,291,0 265,278,297,300,1 245,260,297,299,0 220,226,261,274,0 217,226,234,252,1
229,234,240,241,0 194,206,235,236,0 199,206,225,229,1 184,220,225,243,0 191,207,220,237,0 189,207,218,219,1
210,211,216,218,0 186,192,211,223,0 165,167,192,201,0 122,167,181,189,1 148,181,198,210,1 159,169,198,201,0
165,166,179,180,0 165,166,190,203,1 170,180,190,217,0 132,159,180,183,0 140,144,160,184,0 144,144,205,207,1
208,210,216,218,1 185,216,224,228,1 173,186,224,229,0 181,186,247,258,1 237,246,248,278,1 228,229,247,265,0
232,235,238,241,0 217,226,236,245,0 194,214,226,236,0 156,159,214,240,0 137,145,160,163,0 121,145,149,160,1
147,150,159,159,0 138,150,166,172,1 160,165,179,183,1 152,179,195,200,1 164,191,195,200,0 187,191,208,222,1
205,209,216,218,1 176,209,215,216,0 202,209,243,245,1 239,241,260,263,1 222,226,260,272,0 216,226,241,253,1
236,241,244,248,1 238,244,250,262,1 197,214,250,251,0 203,211,215,232,0 205,211,228,237,1 205,212,228,234,0
197,199,208,213,0 189,199,205,213,1 171,185,205,206,0 171,185,197,202,1 183,197,221,224,1 221,221,254,259,1
245,246,254,256,0 227,238,246,266,0 234,238,277,283,1 236,246,277,292,0 226,246,254,263,1 219,240,255,255,0
235,239,244,247,0 201,202,239,240,0 202,202,222,229,1 218,222,257,262,1 241,246,257,271,0 234,243,246,252,0
240,243,244,246,1 239,243,262,264,1 221,226,262,267,0 191,192,226,231,0 189,192,226,231,1 214,219,226,238,0
216,219,223,226,0 189,200,220,221,0 158,162,200,201,0 156,162,164,178,1 150,156,164,171,0 146,156,172,177,1
170,172,175,176,1 161,164,175,184,0 160,164,180,188,1 177,180,189,202,1 185,189,230,231,1 230,230,259,263,1
252,254,262,263,1 257,262,293,296,1 292,293,313,320,1 313,313,338,349,1 326,338,346,350,1 325,332,346,360,0
331,334,335,339,1 329,334,361,363,1 357,360,383,389,1 363,382,387,392,1 354,359,387,388,0 351,359,370,387,1
367,371,372,375,1 358,369,372,387,0 364,369,402,411,1 384,402,425,427,1 396,406,425,441,0 390,403,406,410,0
400,401,406,411,0 398,401,433,436,1 427,433,465,470,1 433,440,465,472,0 419,440,453,460,1 429,431,453,455,0
424,433,434,439,1 408,411,435,453,0 398,411,419,433,1 416,417,428,452,1 420,424,428,437,0 419,424,432,440,1
423,430,432,433,1 406,419,431,432,0 412,419,450,453,1 383,393,450,451,0 368,379,393,402,0 370,379,391,407,1
390,395,396,397,1 354,364,395,396,0 357,364,366,385,1 347,360,365,367,0 348,360,372,373,1 357,365,372,378,0
362,363,373,373,0 350,363,374,375,1 355,374,381,385,1 350,368,381,399,0 356,368,407,410,1 405,406,418,426,1
418,420,424,425,0 409,420,424,431,1 416,424,440,452,1 432,440,463,467,1 452,461,463,487,1 430,437,462,462,0
429,433,436,436,0 432,433,441,446,1`.trim().split(/\s+/).map(c => c.split(',').map(Number));

const TOP = 101;
const STEP = 4;
const NS = 'http://www.w3.org/2000/svg';
const svg = document.getElementById('candles');

function add(tag, attrs) {
  const el = document.createElementNS(NS, tag);
  for (const name in attrs) el.setAttribute(name, attrs[name]);
  svg.appendChild(el);
}

const GREEN = '#32d232';
add('line', { x1: 0, x2: '100%', y1: 340.5, y2: 340.5, stroke: '#778899' });
add('line', { x1: 0, x2: 942, y1: 331.5, y2: 331.5, stroke: '#3fae3f', 'stroke-dasharray': '9 6 3 6' });

CANDLES.forEach(([high, top, bottom, low, falling], i) => {
  const x = i * STEP;
  add('rect', { x, y: high - TOP, width: 1, height: low - high + 1, fill: GREEN });
  add('rect', { x: x - 1, y: top - TOP, width: 3, height: bottom - top + 1, fill: GREEN });
  if (bottom - top > 1) {
    add('rect', { x, y: top - TOP + 1, width: 1, height: bottom - top - 1, fill: falling ? '#c4f6c4' : '#000' });
  }
});
```
